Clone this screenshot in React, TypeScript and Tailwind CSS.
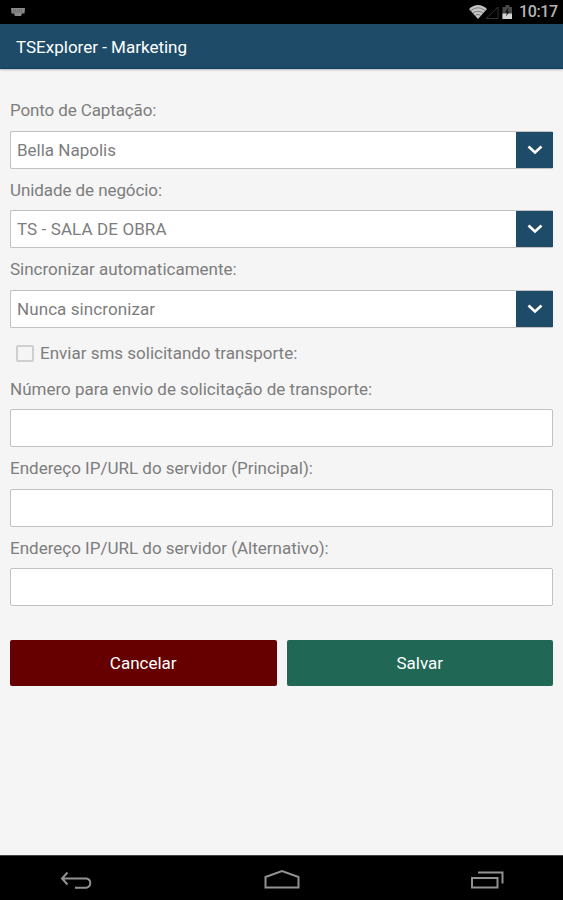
import { useState } from "react";

type FieldProps = {
  label: string;
  value: string;
  labelSpacing?: string;
  valueSpacing?: string;
};

function Label({ children, spacing = "" }: { children: string; spacing?: string }) {
  return (
    <div className={`h-[41.5px] leading-[43px] whitespace-nowrap ${spacing}`}>
      <span>{children}</span>
    </div>
  );
}

function SelectField({ label, value, labelSpacing, valueSpacing = "" }: FieldProps) {
  return (
    <div>
      <Label spacing={labelSpacing}>{label}</Label>
      <button className="flex w-full h-[38px] text-left bg-white border border-r-0 border-[#c2c2c2] rounded-[2px]">
        <span className={`flex-1 pl-[6px] leading-[37px] ${valueSpacing}`}>{value}</span>
        <span className="flex items-center justify-center w-[37px] h-9 bg-[#1e4c68]">
          <svg width="16" height="10" viewBox="0 0 16 10" fill="none" stroke="#fff" strokeWidth="2.6">
            <path d="M1.5 1.5 8 7.500l6.500-6" />
          </svg>
        </span>
      </button>
    </div>
  );
}

function InputField({ label }: { label: string }) {
  const [text, setText] = useState("");

  return (
    <label className="block">
      <Label>{label}</Label>
      <input
        value={text}
        onChange={(e) => setText(e.target.value)}
        className="block w-full h-[38px] px-[6px] bg-white border border-[#c2c2c2] rounded-[2px] outline-none"
      />
    </label>
  );
}

function StatusBar() {
  return (
    <div className="flex items-center justify-between h-6 pl-[10px] pr-[6px] bg-black">
      <svg width="16" height="10" viewBox="0 0 16 10">
        <path d="M1 1h14l-.5 5.500H12L11 9H5L4 6.500H1.500z" fill="#8a8a8a" />
        <path d="M3 3h10M3.500 5h9" stroke="#555" strokeDasharray="1 1" />
      </svg>
      <div className="flex items-center">
        <svg width="46" height="18" viewBox="0 0 46 18">
          <path d="M0 6Q9-2 18 6L9 16z" fill="#c4c4c4" />
          <path d="M2 7.500q7-5.500 14 0M4 10q5-3.500 10 0M6.500 12.300q2.500-1.800 5 0" fill="none" stroke="#666" strokeWidth=".8" />
          <path d="M17 15.500h12V4z" fill="none" stroke="#333" />
          <path d="M36.500 4V2h4v2H43v12h-9.500V4z" fill="#4a4a4a" />
          <path d="M33.500 10.500H43V16h-9.500z" fill="#d4d4d4" />
          <path d="m39 5-3 4.500h2l-1 4 3.500-5h-2L39.500 5z" fill="#111" />
        </svg>
        <span className="ml-1 w-[38px] text-right text-[16px] leading-6 font-medium tracking-[-0.4px] text-[#b5b5b5] whitespace-nowrap">
          10:17
        </span>
      </div>
    </div>
  );
}

function NavBar() {
  return (
    <div className="flex items-center justify-between h-[45px] pl-[58px] pr-[57px] pt-1 bg-black border-t border-[#444]">
      <svg width="36" height="24" viewBox="0 0 36 24" fill="none" stroke="#929292" strokeWidth="2">
        <path d="M9.500 4.500 4 10.500l5.500 6M4 10.500h24.500a4.700 4.700 0 0 1 0 9.200H17" />
      </svg>
      <svg width="40" height="24" viewBox="0 0 40 24" fill="none" stroke="#929292" strokeWidth="2">
        <path d="M3.500 19.500V9L20 3l16.500 6v10.500z" />
      </svg>
      <svg width="36" height="24" viewBox="0 0 36 24" fill="none" stroke="#929292" strokeWidth="2">
        <path d="M2 10h25.500v9.500H2zM8 4.500h24.500v11" />
      </svg>
    </div>
  );
}

export default function App() {
  const [sendSms, setSendSms] = useState(false);

  return (
    <div className="flex flex-col w-full h-[900px] bg-[#f5f5f5] text-[17px] text-[#7d7d7d] font-['Roboto',sans-serif]">
      <StatusBar />

      <header className="h-[45px] pl-4 bg-[#1e4c68] border-b border-[#123c5c] shadow-[0_1px_2px_rgba(0,0,0,0.25)] text-white leading-[47px]">
        <h1>TSExplorer - Marketing</h1>
      </header>

      <main className="flex-1 px-[10px] pt-[20.250px]">
        <SelectField
          label="Ponto de Captação:"
          value="Bella Napolis"
          labelSpacing="tracking-[-0.12px]"
        />
        <SelectField
          label="Unidade de negócio:"
          value="TS - SALA DE OBRA"
          labelSpacing="tracking-[-0.08px]"
          valueSpacing="tracking-[0.1px]"
        />
        <SelectField
          label="Sincronizar automaticamente:"
          value="Nunca sincronizar"
          valueSpacing="tracking-[0.08px]"
        />

        <label className="flex items-center h-10 pt-[11px] pl-[6px]">
          <input
            type="checkbox"
            checked={sendSms}
            onChange={(e) => setSendSms(e.target.checked)}
            className="appearance-none w-[18px] h-[17px] mr-[6px] border-2 border-[#cfcfcf] rounded-[2px] checked:bg-[#1e4c68]"
          />
          <span>Enviar sms solicitando transporte:</span>
        </label>

        <InputField label="Número para envio de solicitação de transporte:" />
        <InputField label="Endereço IP/URL do servidor (Principal):" />
        <InputField label="Endereço IP/URL do servidor (Alternativo):" />

        <div className="grid grid-cols-2 gap-[10px] mt-[34px] text-white">
          <button className="h-[46px] pt-px bg-[#660000] rounded-[2px]">Cancelar</button>
          <button className="h-[46px] pt-px bg-[#206756] rounded-[2px]">Salvar</button>
        </div>
      </main>

      <NavBar />
    </div>
  );
}
